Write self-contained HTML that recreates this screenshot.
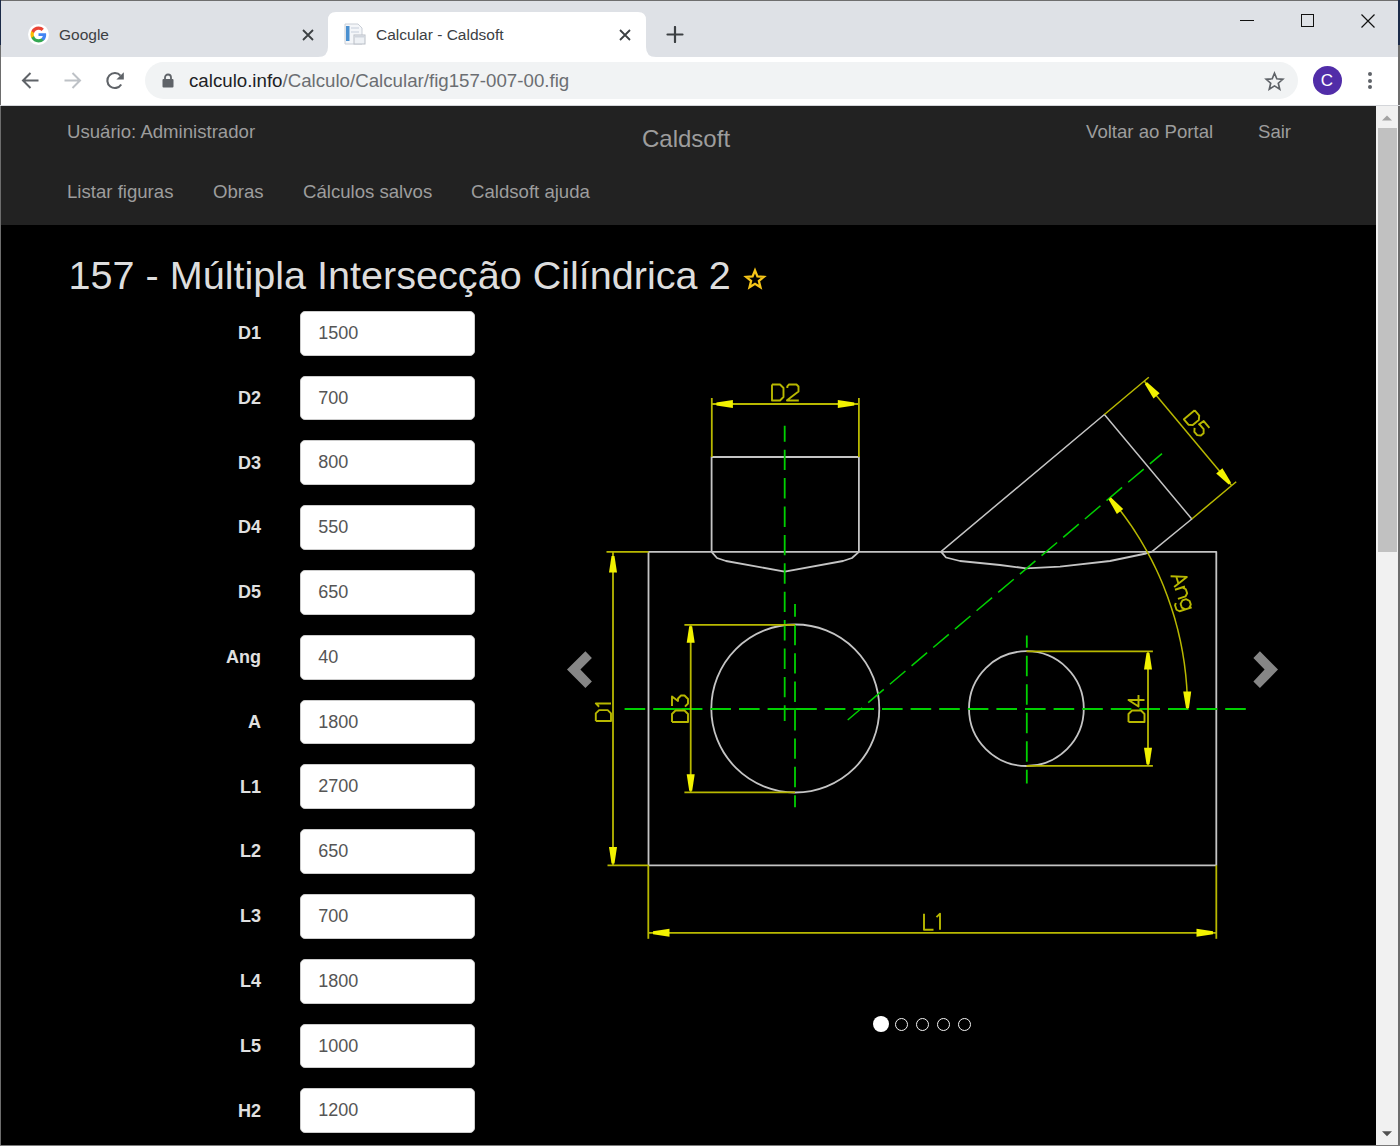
<!DOCTYPE html>
<html><head><meta charset="utf-8">
<style>
html,body{margin:0;padding:0;width:1400px;height:1146px;overflow:hidden;background:#000;font-family:"Liberation Sans",sans-serif;}
.a{position:absolute;}
#chrome{left:0;top:0;width:1400px;height:106px;background:#fff;}
#tabstrip{left:0;top:0;width:1400px;height:57px;background:#dee1e6;}
.tabtxt{font-size:15.5px;color:#3c4043;white-space:nowrap;line-height:20px;margin-top:1px}
#toolbar{left:0;top:57px;width:1400px;height:48px;background:#fff;}
#omni{left:145px;top:62px;width:1153px;height:37px;border-radius:18.5px;background:#f1f3f4;}
.url{font-size:18.7px;line-height:24px;color:#6b6e72;white-space:nowrap;}
#page{left:1px;top:106px;width:1375px;height:1040px;background:#000;overflow:hidden;}
#nav{left:0;top:0;width:1375px;height:119px;background:#222;}
.nl{font-size:18.6px;color:#9d9d9d;white-space:nowrap;line-height:20px;}
.lbl{font-size:18px;font-weight:bold;color:#e0e0e0;text-align:right;width:100px;line-height:20px;}
.inp{width:173px;height:42.8px;background:#fff;border:1px solid #ccc;border-radius:5px;}
.inp span{position:absolute;left:17px;top:11px;font-size:18px;line-height:20px;color:#555;}
#sb{left:1376px;top:106px;width:22px;height:1039px;background:#f1f1f1;}
</style></head><body>
<div class="a" id="chrome"></div>
<div class="a" id="tabstrip"></div>
<!-- window border -->
<div class="a" style="left:0;top:0;width:1400px;height:1px;background:#6e6e6e"></div>
<div class="a" style="left:0;top:0;width:1px;height:45px;background:#1b2a48"></div>
<div class="a" style="left:0;top:45px;width:1px;height:1101px;background:#6d6d6d"></div>
<div class="a" style="left:1398px;top:0;width:2px;height:45px;background:#1b2a48"></div>
<div class="a" style="left:1398px;top:45px;width:2px;height:1101px;background:#6d6d6d"></div>

<!-- active tab -->
<svg class="a" style="left:318px;top:12px" width="338" height="45" viewBox="0 0 338 45">
<path d="M0 45 Q10 45 10 35 L10 8 Q10 0 18 0 L320 0 Q328 0 328 8 L328 35 Q328 45 338 45 Z" fill="#fff"/>
</svg>
<!-- google favicon -->
<svg class="a" style="left:28px;top:24px" width="21" height="21" viewBox="0 0 21 21">
<circle cx="10.5" cy="10.5" r="10.5" fill="#fff"/>
<g transform="translate(2.5,2.5) scale(0.6667)">
<path d="M23.5 12.3c0-.8-.1-1.6-.2-2.3H12v4.4h6.5c-.3 1.5-1.1 2.7-2.4 3.6v3h3.9c2.3-2.1 3.5-5.2 3.5-8.7z" fill="#4285F4"/>
<path d="M12 24c3.2 0 6-1.1 8-2.9l-3.9-3c-1.1.7-2.5 1.2-4.1 1.2-3.1 0-5.8-2.1-6.7-5H1.3v3.1C3.3 21.3 7.3 24 12 24z" fill="#34A853"/>
<path d="M5.3 14.3c-.3-.7-.4-1.5-.4-2.3s.1-1.6.4-2.3V6.6h-4C.5 8.2 0 10.1 0 12s.5 3.8 1.3 5.4l4-3.1z" fill="#FBBC05"/>
<path d="M12 4.8c1.8 0 3.3.6 4.6 1.8l3.4-3.4C18 1.2 15.2 0 12 0 7.3 0 3.3 2.7 1.3 6.6l4 3.1c.9-2.8 3.6-4.9 6.7-4.9z" fill="#EA4335"/>
</g></svg>
<div class="a tabtxt" style="left:59px;top:24px">Google</div>
<svg class="a" style="left:302px;top:29px" width="12" height="12" viewBox="0 0 12 12"><path d="M1 1L11 11M11 1L1 11" stroke="#3c4043" stroke-width="1.8"/></svg>
<!-- caldsoft favicon -->
<svg class="a" style="left:344px;top:23px" width="22" height="22" viewBox="0 0 22 22">
<path d="M1 1H14L18 5V21H1Z" fill="#f4f6f9" stroke="#c9ced6" stroke-width="1"/>
<rect x="2" y="3" width="3.5" height="15" fill="#4a90d0"/>
<rect x="7" y="4" width="8" height="2" fill="#dde2ea"/><rect x="7" y="8" width="8" height="2" fill="#dde2ea"/>
<rect x="10" y="12" width="11" height="9" fill="#eef1f5" stroke="#b9bec6" stroke-width="1"/>
<rect x="10.5" y="12.5" width="10" height="2" fill="#d0d5dd"/>
</svg>
<div class="a tabtxt" style="left:376px;top:24px">Calcular - Caldsoft</div>
<svg class="a" style="left:619px;top:29px" width="12" height="12" viewBox="0 0 12 12"><path d="M1 1L11 11M11 1L1 11" stroke="#3c4043" stroke-width="1.8"/></svg>
<svg class="a" style="left:666px;top:26px" width="18" height="17" viewBox="0 0 18 17"><path d="M9 1V16M1.5 8.5H16.5" stroke="#3c4043" stroke-width="2.2" stroke-linecap="round"/></svg>
<!-- window controls -->
<div class="a" style="left:1240px;top:20px;width:14px;height:1px;background:#111"></div>
<div class="a" style="left:1301px;top:14px;width:11px;height:11px;border:1.2px solid #111"></div>
<svg class="a" style="left:1361px;top:14px" width="14" height="14" viewBox="0 0 14 14"><path d="M0.5 0.5L13.5 13.5M13.5 0.5L0.5 13.5" stroke="#111" stroke-width="1.2"/></svg>

<!-- toolbar -->
<div class="a" style="left:0;top:105px;width:1400px;height:1px;background:#d4d6da"></div>
<svg class="a" style="left:21px;top:71px" width="19" height="19" viewBox="0 0 19 19"><path d="M17.5 9.5H2.5M9.5 2L2 9.5L9.5 17" fill="none" stroke="#5f6368" stroke-width="2"/></svg>
<svg class="a" style="left:63px;top:71px" width="19" height="19" viewBox="0 0 19 19"><path d="M1.5 9.5H16.5M9.5 2L17 9.5L9.5 17" fill="none" stroke="#bdc1c6" stroke-width="2"/></svg>
<svg class="a" style="left:105px;top:71px" width="21" height="19" viewBox="0 0 21 19">
<path d="M16.2 13.5A7.5 7.5 0 1 1 15.5 4.6" fill="none" stroke="#5f6368" stroke-width="2.1"/>
<path d="M18.8 1.2V8.6H11.4Z" fill="#5f6368"/></svg>
<div class="a" id="omni"></div>
<svg class="a" style="left:162px;top:73px" width="12" height="15" viewBox="0 0 12 15">
<path d="M3 6.5V4.5A3 3 0 0 1 9 4.5V6.5" fill="none" stroke="#5f6368" stroke-width="1.8"/>
<rect x="0.5" y="6" width="11" height="8.5" rx="1" fill="#5f6368"/></svg>
<div class="a url" style="left:189px;top:69px"><span style="color:#202124">calculo.info</span>/Calculo/Calcular/fig157-007-00.fig</div>
<svg class="a" style="left:1264px;top:71px" width="21" height="20" viewBox="0 0 21 20">
<path d="M10.5 2.2L12.8 7.8L18.8 8.3L14.3 12.2L15.7 18.1L10.5 14.9L5.3 18.1L6.7 12.2L2.2 8.3L8.2 7.8Z" fill="none" stroke="#5f6368" stroke-width="1.7" stroke-linejoin="miter"/></svg>
<div class="a" style="left:1312.5px;top:66px;width:29px;height:29px;border-radius:50%;background:#512da8;color:#fff;font-size:17px;line-height:29px;text-align:center">C</div>
<div class="a" style="left:1367.5px;top:72px;width:4px;height:4px;border-radius:2px;background:#5f6368"></div>
<div class="a" style="left:1367.5px;top:78.5px;width:4px;height:4px;border-radius:2px;background:#5f6368"></div>
<div class="a" style="left:1367.5px;top:85px;width:4px;height:4px;border-radius:2px;background:#5f6368"></div>

<!-- page -->
<div class="a" id="page">
  <div class="a" id="nav">
    <div class="a nl" style="left:66px;top:16px">Usuário: Administrador</div>
    <div class="a nl" style="left:641px;top:21px;font-size:24px;line-height:24px">Caldsoft</div>
    <div class="a nl" style="left:1085px;top:16px">Voltar ao Portal</div>
    <div class="a nl" style="left:1257px;top:16px">Sair</div>
    <div class="a nl" style="left:66px;top:76px">Listar figuras</div>
    <div class="a nl" style="left:212px;top:76px">Obras</div>
    <div class="a nl" style="left:302px;top:76px">Cálculos salvos</div>
    <div class="a nl" style="left:470px;top:76px">Caldsoft ajuda</div>
  </div>
  <div class="a" style="left:67.5px;top:147px;font-size:39.6px;line-height:44px;color:#ddd;white-space:nowrap">157 - Múltipla Intersecção Cilíndrica 2</div>
  <!--FORM-->
  <div class="a lbl" style="left:160px;top:216.9px">D1</div><div class="a inp" style="left:299.2px;top:204.8px"><span>1500</span></div>
  <div class="a lbl" style="left:160px;top:281.7px">D2</div><div class="a inp" style="left:299.2px;top:269.6px"><span>700</span></div>
  <div class="a lbl" style="left:160px;top:346.5px">D3</div><div class="a inp" style="left:299.2px;top:334.4px"><span>800</span></div>
  <div class="a lbl" style="left:160px;top:411.3px">D4</div><div class="a inp" style="left:299.2px;top:399.2px"><span>550</span></div>
  <div class="a lbl" style="left:160px;top:476.1px">D5</div><div class="a inp" style="left:299.2px;top:464.0px"><span>650</span></div>
  <div class="a lbl" style="left:160px;top:540.9px">Ang</div><div class="a inp" style="left:299.2px;top:528.8px"><span>40</span></div>
  <div class="a lbl" style="left:160px;top:605.7px">A</div><div class="a inp" style="left:299.2px;top:593.6px"><span>1800</span></div>
  <div class="a lbl" style="left:160px;top:670.5px">L1</div><div class="a inp" style="left:299.2px;top:658.4px"><span>2700</span></div>
  <div class="a lbl" style="left:160px;top:735.3px">L2</div><div class="a inp" style="left:299.2px;top:723.2px"><span>650</span></div>
  <div class="a lbl" style="left:160px;top:800.1px">L3</div><div class="a inp" style="left:299.2px;top:788.0px"><span>700</span></div>
  <div class="a lbl" style="left:160px;top:864.9px">L4</div><div class="a inp" style="left:299.2px;top:852.8px"><span>1800</span></div>
  <div class="a lbl" style="left:160px;top:929.7px">L5</div><div class="a inp" style="left:299.2px;top:917.6px"><span>1000</span></div>
  <div class="a lbl" style="left:160px;top:994.5px">H2</div><div class="a inp" style="left:299.2px;top:982.4px"><span>1200</span></div>
<!--/FORM-->
  <svg class="a" style="left:741px;top:160px" width="26" height="25" viewBox="0 0 26 25">
  <path d="M13.00 4.40 L15.41 10.39 L21.84 10.83 L16.89 14.96 L18.47 21.22 L13.00 17.79 L7.53 21.22 L9.11 14.96 L4.16 10.83 L10.59 10.39Z" fill="none" stroke="#f5c518" stroke-width="2.3"/></svg>
</div>
<!--DRAWING-->
<svg class="a" style="left:0;top:0" width="1400" height="1146" viewBox="0 0 1400 1146">
<path d="M648.5 551.8 L1216.3 551.8 L1216.3 865.3 L648.5 865.3 Z" fill="none" stroke="#c4c4c4" stroke-width="1.8" stroke-linejoin="round"/>
<path d="M711.6 551.8 L711.6 457.0 L858.9 457.0 L858.9 551.8" fill="none" stroke="#c4c4c4" stroke-width="1.8" stroke-linejoin="round"/>
<path d="M711.6 551.8 L717.0 558.0 L726.0 561.0 L784.7 571.6 L843.0 561.0 L852.0 558.0 L858.9 551.8" fill="none" stroke="#c4c4c4" stroke-width="1.8" stroke-linejoin="round"/>
<path d="M941.0 551.6 L1104.4 414.5 L1191.8 519.0 L1152.0 551.6" fill="none" stroke="#c4c4c4" stroke-width="1.5" stroke-linejoin="round"/>
<path d="M941.0 551.6 L946.0 557.5 L960.0 561.0 L1000.0 565.0 L1026.0 568.3 L1060.0 566.6 L1110.0 561.0 L1146.0 553.5 L1152.0 551.6" fill="none" stroke="#c4c4c4" stroke-width="1.8" stroke-linejoin="round"/>
<circle cx="795.3" cy="708.5" r="84" fill="none" stroke="#c4c4c4" stroke-width="1.8"/>
<circle cx="1026.4" cy="708.6" r="57.4" fill="none" stroke="#c4c4c4" stroke-width="1.8"/>
<line x1="624.6" y1="709.0" x2="1246.0" y2="709.0" stroke="#00d000" stroke-width="1.8" stroke-dasharray="20.6 8"/>
<line x1="673.0" y1="709.0" x2="682.5" y2="709.0" stroke="#00d000" stroke-width="1.8" />
<line x1="787.5" y1="709.0" x2="797.0" y2="709.0" stroke="#00d000" stroke-width="1.8" />
<line x1="784.7" y1="425.7" x2="784.7" y2="721.0" stroke="#00d000" stroke-width="1.8" stroke-dasharray="20.4 8" stroke-dashoffset="4.4"/>
<line x1="795.0" y1="604.0" x2="795.0" y2="807.2" stroke="#00d000" stroke-width="1.8" stroke-dasharray="20.4 8" stroke-dashoffset="7.6"/>
<line x1="1026.8" y1="635.6" x2="1026.8" y2="783.6" stroke="#00d000" stroke-width="1.8" stroke-dasharray="20.5 8" stroke-dashoffset="8.3"/>
<line x1="1162.0" y1="453.6" x2="847.7" y2="720.0" stroke="#00d000" stroke-width="1.5" stroke-dasharray="20.4 8" stroke-dashoffset="4.5"/>
<line x1="711.8" y1="398.0" x2="711.8" y2="457.0" stroke="#b8b800" stroke-width="1.8" />
<line x1="858.9" y1="398.0" x2="858.9" y2="457.0" stroke="#b8b800" stroke-width="1.8" />
<line x1="711.8" y1="404.0" x2="858.9" y2="404.0" stroke="#b8b800" stroke-width="1.8" />
<path d="M716.4 402.5 L732.9 400.0 L732.9 408.0 L716.4 405.5 Z" fill="#f2f200"/>
<path d="M854.3 405.5 L837.8 408.0 L837.8 400.0 L854.3 402.5 Z" fill="#f2f200"/>
<path transform="translate(772.0 400.5) rotate(0) scale(1.0)" d="M0.00 -16.00 L8.00 -16.00 L11.50 -12.50 L11.50 -3.50 L8.00 0.00 L0.00 0.00 L0.00 -16.00 M15.30 -12.50 L15.30 -14.20 L17.00 -16.00 L24.50 -16.00 L26.50 -14.00 L26.50 -9.00 L15.00 -0.30 L15.00 0.00 L26.80 0.00" fill="none" stroke="#b8b800" stroke-width="1.90" stroke-linejoin="round"/>
<line x1="606.5" y1="551.8" x2="648.5" y2="551.8" stroke="#b8b800" stroke-width="1.8" />
<line x1="607.5" y1="865.3" x2="648.5" y2="865.3" stroke="#b8b800" stroke-width="1.8" />
<line x1="613.0" y1="551.8" x2="613.0" y2="865.3" stroke="#b8b800" stroke-width="1.8" />
<path d="M614.5 556.0 L617.0 572.5 L609.0 572.5 L611.5 556.0 Z" fill="#f2f200"/>
<path d="M611.5 863.5 L609.0 847.0 L617.0 847.0 L614.5 863.5 Z" fill="#f2f200"/>
<path transform="translate(611.0 721.0) rotate(-90) scale(0.95)" d="M0.00 -16.00 L8.00 -16.00 L11.50 -12.50 L11.50 -3.50 L8.00 0.00 L0.00 0.00 L0.00 -16.00 M15.00 -12.50 L18.50 -16.00 L18.50 0.00" fill="none" stroke="#b8b800" stroke-width="2.00" stroke-linejoin="round"/>
<line x1="684.4" y1="624.8" x2="795.0" y2="624.8" stroke="#b8b800" stroke-width="1.8" />
<line x1="684.4" y1="792.4" x2="795.0" y2="792.4" stroke="#b8b800" stroke-width="1.8" />
<line x1="690.7" y1="624.8" x2="690.7" y2="792.4" stroke="#b8b800" stroke-width="1.8" />
<path d="M692.2 626.3 L694.7 642.8 L686.7 642.8 L689.2 626.3 Z" fill="#f2f200"/>
<path d="M689.2 790.7 L686.7 774.2 L694.7 774.2 L692.2 790.7 Z" fill="#f2f200"/>
<path transform="translate(688.0 722.0) rotate(-90) scale(1.0)" d="M0.00 -16.00 L8.00 -16.00 L11.50 -12.50 L11.50 -3.50 L8.00 0.00 L0.00 0.00 L0.00 -16.00 M16.00 -16.00 L25.50 -16.00 L21.00 -10.00 L23.50 -10.00 L26.50 -7.00 L26.50 -3.50 L23.00 0.00 L18.50 0.00 L15.30 -3.00" fill="none" stroke="#b8b800" stroke-width="1.90" stroke-linejoin="round"/>
<line x1="1026.4" y1="651.3" x2="1152.9" y2="651.3" stroke="#b8b800" stroke-width="1.8" />
<line x1="1026.4" y1="765.9" x2="1152.9" y2="765.9" stroke="#b8b800" stroke-width="1.8" />
<line x1="1148.0" y1="651.3" x2="1148.0" y2="765.9" stroke="#b8b800" stroke-width="1.8" />
<path d="M1149.5 653.0 L1152.0 669.5 L1144.0 669.5 L1146.5 653.0 Z" fill="#f2f200"/>
<path d="M1146.5 764.3 L1144.0 747.8 L1152.0 747.8 L1149.5 764.3 Z" fill="#f2f200"/>
<path transform="translate(1144.5 722.0) rotate(-90) scale(1.0)" d="M0.00 -16.00 L8.00 -16.00 L11.50 -12.50 L11.50 -3.50 L8.00 0.00 L0.00 0.00 L0.00 -16.00 M22.00 0.00 L22.00 -16.00 L15.50 -6.00 L27.00 -6.00" fill="none" stroke="#b8b800" stroke-width="1.90" stroke-linejoin="round"/>
<line x1="648.3" y1="865.3" x2="648.3" y2="938.8" stroke="#b8b800" stroke-width="1.8" />
<line x1="1216.3" y1="865.3" x2="1216.3" y2="938.8" stroke="#b8b800" stroke-width="1.8" />
<line x1="648.3" y1="932.8" x2="1216.3" y2="932.8" stroke="#b8b800" stroke-width="1.8" />
<path d="M653.0 931.3 L669.5 928.8 L669.5 936.8 L653.0 934.3 Z" fill="#f2f200"/>
<path d="M1213.0 934.3 L1196.5 936.8 L1196.5 928.8 L1213.0 931.3 Z" fill="#f2f200"/>
<path transform="translate(924.0 929.7) rotate(0) scale(1.0)" d="M0.00 -16.00 L0.00 0.00 L9.50 0.00 M12.50 -12.50 L16.00 -16.00 L16.00 0.00" fill="none" stroke="#b8b800" stroke-width="1.90" stroke-linejoin="round"/>
<line x1="1104.4" y1="414.5" x2="1148.8" y2="377.2" stroke="#b8b800" stroke-width="1.5" />
<line x1="1191.8" y1="519.0" x2="1236.2" y2="481.7" stroke="#b8b800" stroke-width="1.5" />
<line x1="1144.2" y1="381.1" x2="1231.6" y2="485.6" stroke="#b8b800" stroke-width="1.5" />
<path d="M1147.1 382.2 L1159.6 393.3 L1153.5 398.4 L1144.8 384.1 Z" fill="#f2f200"/>
<path d="M1228.7 484.4 L1216.2 473.4 L1222.4 468.3 L1231.0 482.5 Z" fill="#f2f200"/>
<path transform="translate(1183.9 419.3) rotate(50) scale(0.88)" d="M0.00 -16.00 L8.00 -16.00 L11.50 -12.50 L11.50 -3.50 L8.00 0.00 L0.00 0.00 L0.00 -16.00 M26.00 -16.00 L16.00 -16.00 L15.50 -9.50 L18.00 -10.00 L23.00 -10.00 L26.50 -7.00 L26.50 -3.00 L23.50 0.00 L18.50 0.00 L15.30 -3.00" fill="none" stroke="#b8b800" stroke-width="2.16" stroke-linejoin="round"/>
<path d="M1187.5 709.0 L1187.4 703.3 L1187.3 697.5 L1187.0 691.8 L1186.7 686.1 L1186.2 680.3 L1185.7 674.6 L1185.0 668.9 L1184.3 663.2 L1183.4 657.5 L1182.5 651.9 L1181.4 646.2 L1180.3 640.6 L1179.0 635.0 L1177.7 629.4 L1176.2 623.9 L1174.7 618.3 L1173.0 612.8 L1171.3 607.4 L1169.4 601.9 L1167.5 596.5 L1165.5 591.2 L1163.4 585.8 L1161.2 580.5 L1158.9 575.3 L1156.5 570.0 L1154.0 564.9 L1151.4 559.7 L1148.7 554.7 L1146.0 549.6 L1143.1 544.6 L1140.2 539.7 L1137.2 534.8 L1134.1 530.0 L1130.9 525.2 L1127.6 520.5 L1124.2 515.8 L1120.8 511.2 L1117.3 506.7 L1113.7 502.2 L1110.0 497.8" fill="none" stroke="#b8b800" stroke-width="1.5" stroke-linejoin="round"/>
<path d="M1111.0 497.6 L1123.2 508.9 L1116.9 513.9 L1108.6 499.4 Z" fill="#f2f200"/>
<path d="M1186.0 708.0 L1183.2 691.6 L1191.2 691.4 L1189.0 708.0 Z" fill="#f2f200"/>
<path transform="translate(1170.6 576.2) rotate(72) scale(0.95)" d="M0.00 0.00 L6.00 -16.00 L12.00 0.00 M2.20 -5.50 L9.80 -5.50 M15.00 -11.00 L15.00 0.00 M15.00 -8.00 L18.00 -11.00 L22.50 -11.00 L25.00 -8.50 L25.00 0.00 M38.00 -11.00 L38.00 2.50 L35.50 5.00 L30.50 5.00 L28.50 3.50 M38.00 -8.00 L35.00 -11.00 L31.00 -11.00 L28.00 -8.00 L28.00 -4.00 L31.00 -1.00 L35.00 -1.00 L38.00 -4.00" fill="none" stroke="#b8b800" stroke-width="2.00" stroke-linejoin="round"/>
</svg>
<!--/DRAWING-->
<!-- carousel controls -->
<svg class="a" style="left:0;top:0" width="1400" height="1146" viewBox="0 0 1400 1146">
<path d="M567 669.6L585.4 651.3L591.9 658.1L580.4 669.6L591.9 681.4L585.4 687.9Z" fill="#868686"/>
<path d="M1278 669.6L1259.9 651.3L1253.4 658.1L1264.6 669.6L1253.4 681.4L1259.9 687.9Z" fill="#868686"/>
</svg>

<div class="a" style="left:872.8px;top:1016.4px;width:15.8px;height:15.8px;border-radius:50%;background:#fff"></div>
<div class="a" style="left:895.1px;top:1017.7px;width:13.2px;height:13.2px;box-sizing:border-box;border-radius:50%;border:1.6px solid #f4f4f4"></div>
<div class="a" style="left:915.7px;top:1017.7px;width:13.2px;height:13.2px;box-sizing:border-box;border-radius:50%;border:1.6px solid #f4f4f4"></div>
<div class="a" style="left:936.8px;top:1017.7px;width:13.2px;height:13.2px;box-sizing:border-box;border-radius:50%;border:1.6px solid #f4f4f4"></div>
<div class="a" style="left:957.9px;top:1017.7px;width:13.2px;height:13.2px;box-sizing:border-box;border-radius:50%;border:1.6px solid #f4f4f4"></div>
<div class="a" id="sb"></div>
<div class="a" id="bb" style="left:0;top:1145px;width:1400px;height:1px;background:#7a7a7a"></div>
<div class="a" style="left:1378px;top:128px;width:19px;height:424px;background:#c1c1c1"></div>
<svg class="a" style="left:1376px;top:106px" width="22" height="1040" viewBox="0 0 22 1040">
<path d="M6 14.5L11 9.5L16 14.5Z" fill="#a3a3a3"/>
<path d="M6 1025.3L11 1030.3L16 1025.3Z" fill="#505050"/>
</svg>
</body></html>
